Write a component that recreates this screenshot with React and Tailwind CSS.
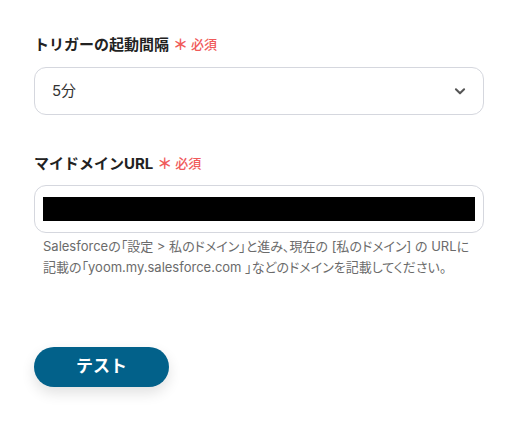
const Required = () => (
  <span className="ml-1 inline-flex items-center text-[13px] font-medium text-[#f05a5a]">
    <span className="mr-[3px] text-[15px] font-bold">＊</span>必須
  </span>
);

export default function App() {
  return (
    <div
      className="min-h-[423px] w-[522px] bg-white px-[34px] pt-[34px] text-[#222]"
      style={{ fontFamily: 'Inter, "Noto Sans CJK JP", sans-serif' }}
    >
      {/* Trigger interval */}
      <div className="flex h-[22px] items-center text-[15px] font-bold">
        トリガーの起動間隔
        <Required />
      </div>
      <div className="mt-[11px] flex h-[48px] w-[450px] items-center justify-between rounded-[12px] border border-[#d5d7de] pl-[17px] pr-[16px]">
        <span className="text-[15px] text-[#333]">5分</span>
        <svg width="14" height="14" viewBox="0 0 24 24" fill="none" stroke="#555" strokeWidth="3.5" strokeLinecap="round" strokeLinejoin="round">
          <path d="M5 9l7 7 7-7" />
        </svg>
      </div>

      {/* Domain URL */}
      <div className="mt-[38px] flex h-[22px] items-center text-[15px] font-bold">
        マイドメインURL
        <Required />
      </div>
      <div className="mt-[10px] flex h-[48px] w-[450px] items-center rounded-[12px] border border-[#d5d7de] px-[8px]">
        <div className="h-[24px] w-full bg-black" />
      </div>
      <p className="mt-[3px] whitespace-nowrap pl-[9px] text-[13px] leading-[21px] text-[#6b6b6b] [font-feature-settings:'palt']">
        Salesforceの「設定 &gt; 私のドメイン」と進み、現在の [私のドメイン] の URLに
        <br />
        記載の「yoom.my.salesforce.com 」などのドメインを記載してください。
      </p>

      {/* Test button */}
      <button className="mt-[69px] flex h-[40px] w-[135px] items-center justify-center rounded-full bg-[#02618a] text-[17px] font-bold text-white shadow-[0_6px_14px_rgba(0,0,0,0.12)]">
        テスト
      </button>
    </div>
  );
}
